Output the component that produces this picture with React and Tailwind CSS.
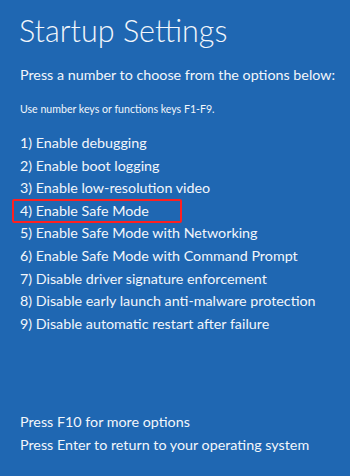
const OPTIONS = [
  '1) Enable debugging',
  '2) Enable boot logging',
  '3) Enable low-resolution video',
  '4) Enable Safe Mode',
  '5) Enable Safe Mode with Networking',
  '6) Enable Safe Mode with Command Prompt',
  '7) Disable driver signature enforcement',
  '8) Disable early launch anti-malware protection',
  '9) Disable automatic restart after failure',
];

export default function App() {
  return (
    <div
      className="w-[350px] h-[476px] bg-[#1f67b2] text-[#f2f6fb] overflow-hidden pl-[20px]"
      style={{ fontFamily: 'Lato, "Noto Sans", sans-serif' }}
    >
      <h1 className="text-[30.5px] font-light leading-[38px] pt-[11px] -ml-[1px] whitespace-nowrap">Startup Settings</h1>

      <p className="text-[14.3px] leading-[18px] mt-[17px] whitespace-nowrap">
        Press a number to choose from the options below:
      </p>
      <p className="text-[10.6px] leading-[14px] mt-[18px] whitespace-nowrap">
        Use number keys or functions keys F1-F9.
      </p>

      <ul className="mt-[16px]">
        {OPTIONS.map((opt, i) => (
          <li key={opt} className="relative text-[14.3px] leading-[22.6px] whitespace-nowrap">
            {i === 3 && (
              <span className="absolute left-[-8px] top-[-1px] w-[170px] h-[24px] border-2 border-[#ff2020] rounded-[2px]" />
            )}
            {opt}
          </li>
        ))}
      </ul>

      <div className="mt-[76px] text-[14.3px] leading-[22.6px] whitespace-nowrap">
        <p>Press F10 for more options</p>
        <p>Press Enter to return to your operating system</p>
      </div>
    </div>
  );
}
